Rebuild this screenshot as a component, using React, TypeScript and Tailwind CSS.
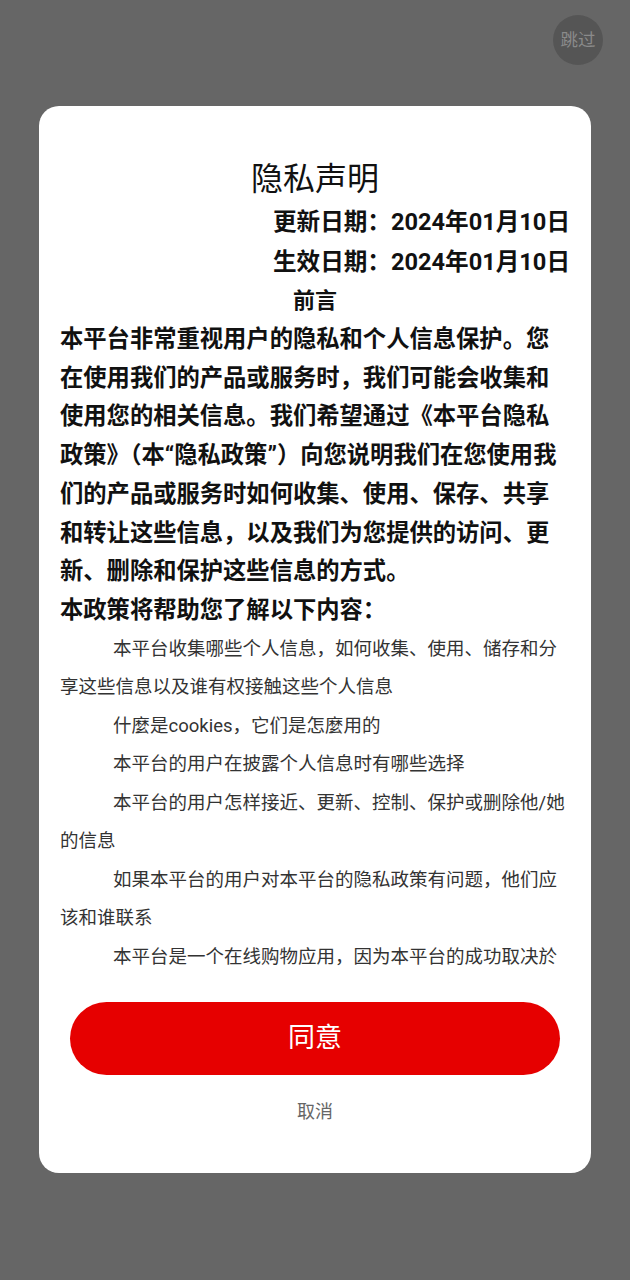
import React from 'react';

const font = { fontFamily: 'Roboto, "Noto Sans CJK SC", sans-serif' };

const items = [
  '本平台收集哪些个人信息，如何收集、使用、储存和分享这些信息以及谁有权接触这些个人信息',
  '什麼是cookies，它们是怎麼用的',
  '本平台的用户在披露个人信息时有哪些选择',
  '本平台的用户怎样接近、更新、控制、保护或删除他/她的信息',
  '如果本平台的用户对本平台的隐私政策有问题，他们应该和谁联系',
  '本平台是一个在线购物应用，因为本平台的成功取决於用户对本平台的信任，所以本平台非常重视用户的隐私。',
];

const App: React.FC = () => {
  return (
    <div className="relative w-full h-[1280px] bg-[#666666] overflow-hidden" style={font}>
      {/* skip */}
      <button className="absolute top-[15px] right-[27px] w-[50px] h-[50px] rounded-full bg-[#555555] text-[#8a8a8a] text-[17.5px] flex items-center justify-center">
        跳过
      </button>

      <div className="absolute left-[39px] top-[106px] w-[552px] h-[1067px] bg-white rounded-[20px] flex flex-col">
        <div className="h-[870px] overflow-hidden px-[21px] pt-[50px]">
          <h1 className="text-center text-[32px] leading-[46px] text-[#111] font-normal">隐私声明</h1>
          <div className="text-right text-[23.6px] leading-[40px] font-bold text-[#111]">
            <div>更新日期：2024年01月10日</div>
            <div>生效日期：2024年01月10日</div>
          </div>
          <div className="text-center text-[22px] leading-[38px] font-bold text-[#111]">前言</div>
          <p className="text-[23.3px] leading-[38.7px] font-bold text-[#111]">
            本平台非常重视用户的隐私和个人信息保护。您在使用我们的产品或服务时，我们可能会收集和使用您的相关信息。我们希望通过《本平台隐私政策》（本“隐私政策”）向您说明我们在您使用我们的产品或服务时如何收集、使用、保存、共享和转让这些信息，以及我们为您提供的访问、更新、删除和保护这些信息的方式。
          </p>
          <p className="text-[23.3px] leading-[38.7px] font-bold text-[#111]">本政策将帮助您了解以下内容：</p>
          {items.map((t, i) => (
            <p key={i} className="text-[18.5px] leading-[38.5px] text-[#333] indent-[53px]">
              {t}
            </p>
          ))}
        </div>
        <div className="mt-[26px] px-[31px]">
          <button className="w-full h-[73px] rounded-full bg-[#e60000] text-white text-[27px]">同意</button>
        </div>
        <div className="mt-[20px] text-center text-[18px] leading-[34px] text-[#666]">取消</div>
      </div>
    </div>
  );
};

export default App;
